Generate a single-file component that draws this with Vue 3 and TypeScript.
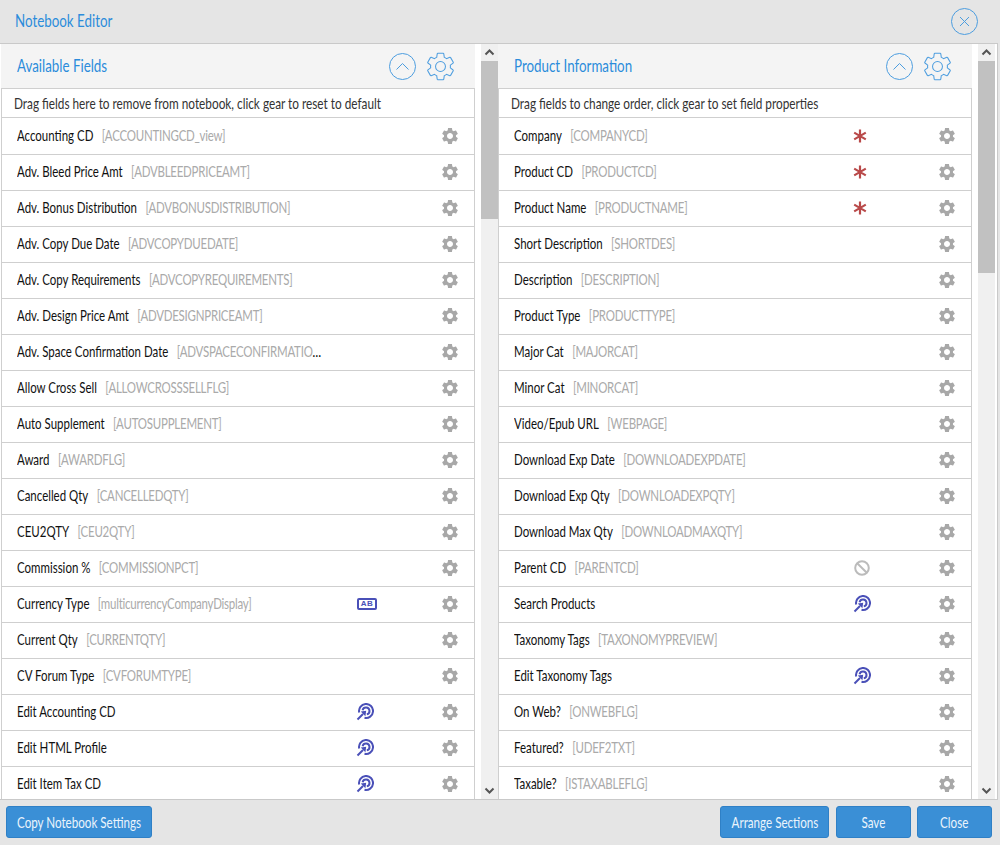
<script setup lang="ts">
type Mark = '' | 'ab' | 'target' | 'star' | 'ban'
interface Row { label: string; code: string; mark?: Mark }

const gear = 'M19.14 12.94c.04-.3.06-.61.06-.94 0-.32-.02-.64-.07-.94l2.03-1.58c.18-.14.23-.41.12-.61l-1.92-3.32c-.12-.22-.37-.29-.59-.22l-2.39.96c-.5-.38-1.03-.7-1.62-.94l-.36-2.54c-.04-.24-.24-.41-.48-.41h-3.84c-.24 0-.43.17-.47.41l-.36 2.54c-.59.24-1.13.57-1.62.94l-2.39-.96c-.22-.08-.47 0-.59.22L2.74 8.87c-.12.21-.08.47.12.61l2.03 1.58c-.05.3-.09.63-.09.94s.02.64.07.94l-2.03 1.58c-.18.14-.23.41-.12.61l1.92 3.32c.12.22.37.29.59.22l2.39-.96c.5.38 1.03.7 1.62.94l.36 2.54c.05.24.24.41.48.41h3.84c.24 0 .44-.17.47-.41l.36-2.54c.59-.24 1.13-.56 1.62-.94l2.39.96c.22.08.47 0 .59-.22l1.92-3.32c.12-.22.07-.47-.12-.61l-2.01-1.58zM12 15.6c-1.98 0-3.6-1.62-3.6-3.6s1.62-3.6 3.6-3.6 3.6 1.62 3.6 3.6-1.62 3.6-3.6 3.6z'

const panels: { title: string; hint: string; thumb: number; rows: Row[] }[] = [
  {
    title: 'Available Fields',
    hint: 'Drag fields here to remove from notebook, click gear to reset to default',
    thumb: 158,
    rows: [
      { label: 'Accounting CD', code: '[ACCOUNTINGCD_view]' },
      { label: 'Adv. Bleed Price Amt', code: '[ADVBLEEDPRICEAMT]' },
      { label: 'Adv. Bonus Distribution', code: '[ADVBONUSDISTRIBUTION]' },
      { label: 'Adv. Copy Due Date', code: '[ADVCOPYDUEDATE]' },
      { label: 'Adv. Copy Requirements', code: '[ADVCOPYREQUIREMENTS]' },
      { label: 'Adv. Design Price Amt', code: '[ADVDESIGNPRICEAMT]' },
      { label: 'Adv. Space Confirmation Date', code: '[ADVSPACECONFIRMATIONDATE]' },
      { label: 'Allow Cross Sell', code: '[ALLOWCROSSSELLFLG]' },
      { label: 'Auto Supplement', code: '[AUTOSUPPLEMENT]' },
      { label: 'Award', code: '[AWARDFLG]' },
      { label: 'Cancelled Qty', code: '[CANCELLEDQTY]' },
      { label: 'CEU2QTY', code: '[CEU2QTY]' },
      { label: 'Commission %', code: '[COMMISSIONPCT]' },
      { label: 'Currency Type', code: '[multicurrencyCompanyDisplay]', mark: 'ab' },
      { label: 'Current Qty', code: '[CURRENTQTY]' },
      { label: 'CV Forum Type', code: '[CVFORUMTYPE]' },
      { label: 'Edit Accounting CD', code: '', mark: 'target' },
      { label: 'Edit HTML Profile', code: '', mark: 'target' },
      { label: 'Edit Item Tax CD', code: '', mark: 'target' },
    ],
  },
  {
    title: 'Product Information',
    hint: 'Drag fields to change order, click gear to set field properties',
    thumb: 212,
    rows: [
      { label: 'Company', code: '[COMPANYCD]', mark: 'star' },
      { label: 'Product CD', code: '[PRODUCTCD]', mark: 'star' },
      { label: 'Product Name', code: '[PRODUCTNAME]', mark: 'star' },
      { label: 'Short Description', code: '[SHORTDES]' },
      { label: 'Description', code: '[DESCRIPTION]' },
      { label: 'Product Type', code: '[PRODUCTTYPE]' },
      { label: 'Major Cat', code: '[MAJORCAT]' },
      { label: 'Minor Cat', code: '[MINORCAT]' },
      { label: 'Video/Epub URL', code: '[WEBPAGE]' },
      { label: 'Download Exp Date', code: '[DOWNLOADEXPDATE]' },
      { label: 'Download Exp Qty', code: '[DOWNLOADEXPQTY]' },
      { label: 'Download Max Qty', code: '[DOWNLOADMAXQTY]' },
      { label: 'Parent CD', code: '[PARENTCD]', mark: 'ban' },
      { label: 'Search Products', code: '', mark: 'target' },
      { label: 'Taxonomy Tags', code: '[TAXONOMYPREVIEW]' },
      { label: 'Edit Taxonomy Tags', code: '', mark: 'target' },
      { label: 'On Web?', code: '[ONWEBFLG]' },
      { label: 'Featured?', code: '[UDEF2TXT]' },
      { label: 'Taxable?', code: '[ISTAXABLEFLG]' },
    ],
  },
]
</script>

<template>
  <div class="editor">
    <header class="top">
      <span class="title">Notebook Editor</span>
      <svg class="round" width="27" height="27" viewBox="0 0 27 27">
        <circle cx="13.5" cy="13.5" r="13" />
        <path d="M9 9l9 9M18 9l-9 9" />
      </svg>
    </header>

    <main class="columns">
      <section v-for="p in panels" :key="p.title" class="column">
        <div class="panel">
          <div class="panel-head">
            <span class="title head-title">{{ p.title }}</span>
            <svg class="round" width="27" height="27" viewBox="0 0 27 27">
              <circle cx="13.5" cy="13.5" r="13" />
              <path d="M7.5 16.5l6-6 6 6" />
            </svg>
            <svg class="cog-line" width="33" height="33" viewBox="0 0 24 24">
              <path :d="gear" />
            </svg>
          </div>
          <div class="list">
            <div class="hint"><span class="hint-text">{{ p.hint }}</span></div>
            <div v-for="r in p.rows" :key="r.label" class="row">
              <div class="row-text">
                <span class="label">{{ r.label }}</span>
                <span v-if="r.code" class="code">{{ r.code }}</span>
              </div>
              <div class="mark">
                <span v-if="r.mark === 'ab'" class="ab">AB</span>
                <svg v-else-if="r.mark === 'target'" width="18" height="18" viewBox="0 0 18 18" class="target">
                  <path d="M3.2 9.5A7 7 0 1 1 8.5 14.8" />
                  <path d="M6.6 7.2A3.5 3.5 0 1 1 10.8 11.4" />
                  <path d="M1.5 16.5L7 11" />
                  <path class="arrow" d="M10.2 7.8L4.8 8.6 9.4 13.2z" />
                </svg>
                <svg v-else-if="r.mark === 'star'" width="14" height="14" viewBox="0 0 14 14" class="star">
                  <path d="M7 .5v13M1.2 3.6l11.6 6.8M12.8 3.6L1.2 10.4" />
                </svg>
                <svg v-else-if="r.mark === 'ban'" width="16" height="16" viewBox="0 0 16 16" class="ban">
                  <circle cx="8" cy="8" r="6.8" />
                  <path d="M3.2 3.2l9.6 9.6" />
                </svg>
              </div>
              <svg class="cog" width="20" height="20" viewBox="0 0 24 24">
                <path :d="gear" />
              </svg>
            </div>
          </div>
        </div>
        <div class="bar">
          <svg class="bar-btn" width="17" height="17" viewBox="0 0 17 17"><path d="M4.5 10.5l4-4 4 4" /></svg>
          <div class="bar-track">
            <div class="bar-thumb" :style="{ height: p.thumb + 'px' }"></div>
          </div>
          <svg class="bar-btn" width="17" height="17" viewBox="0 0 17 17"><path d="M4.5 6.5l4 4 4-4" /></svg>
        </div>
      </section>
    </main>

    <footer class="bottom">
      <button class="btn"><span>Copy Notebook Settings</span></button>
      <span class="spacer"></span>
      <button class="btn wide"><span>Arrange Sections</span></button>
      <button class="btn small"><span>Save</span></button>
      <button class="btn small"><span>Close</span></button>
    </footer>
  </div>
</template>

<style>
html, body { margin: 0; background: #e5e5e5; }
</style>

<style scoped>
.editor {
  --sx: .765;
  width: 1000px;
  height: 845px;
  display: flex;
  flex-direction: column;
  background: #e5e5e5;
  font-family: Lato, "Liberation Sans", sans-serif;
  font-size: 15px;
  overflow: hidden;
}
.top {
  height: 43px;
  flex: none;
  display: flex;
  align-items: center;
  justify-content: space-between;
  padding: 0 22px 0 15px;
  box-sizing: border-box;
}
.title {
  display: inline-block;
  font-size: 17px;
  color: #2b8cdb;
  white-space: nowrap;
  margin-bottom: 2px;
  transform: scaleX(.785);
  transform-origin: left center;
}
.round { flex: none; }
.round circle, .round path { fill: none; stroke: #4c9ddf; stroke-width: 1; }
.columns {
  flex: none;
  width: 998px;
  height: 757px;
  display: flex;
  background: #fff;
  border-top: 1px solid #c9c9c9;
  border-bottom: 1px solid #c9c9c9;
  border-right: 1px solid #c9c9c9;
  box-sizing: border-box;
  overflow: hidden;
}
.column { display: flex; flex: none; width: 497px; }
.column:first-child { width: 498px; }
.panel { width: 474px; flex: none; display: flex; flex-direction: column; }
.column:first-child .panel { width: 475px; padding-left: 1px; box-sizing: border-box; }
.panel-head {
  flex: none;
  height: 44px;
  background: #f4f4f4;
  display: flex;
  align-items: center;
  padding: 1px 18px 0 16px;
  gap: 8px;
  box-sizing: border-box;
}
.head-title { margin-right: auto; }
.cog-line { flex: none; }
.cog-line path { fill: none; stroke: #4c9ddf; stroke-width: .75; }
.list {
  flex: 1;
  min-height: 0;
  overflow: hidden;
  background: #fff;
  border: 1px solid #cfcfcf;
  border-width: 1px 1px 0;
}
.hint {
  height: 29px;
  line-height: 28px;
  padding-left: 12px;
  color: #333;
  box-sizing: border-box;
  border-bottom: 1px solid #cfcfcf;
  white-space: nowrap;
}
.hint-text {
  display: inline-block;
  transform: scaleX(.786);
  transform-origin: left center;
}
.row {
  height: 36px;
  box-sizing: border-box;
  border-bottom: 1px solid #cfcfcf;
  display: flex;
  align-items: center;
  padding: 0 0 1px 15px;
}
.row:nth-child(2) { height: 37px; }
.row-text {
  width: calc(308px / var(--sx));
  margin-right: calc(303px - 308px / var(--sx));
  margin-bottom: 2px;
  flex: none;
  white-space: nowrap;
  overflow: hidden;
  text-overflow: ellipsis;
  transform: scaleX(var(--sx));
  transform-origin: left center;
}
.label { color: #111; margin-right: 11px; }
.code { color: #aaa; letter-spacing: -.3px; }
.mark {
  width: 120px;
  flex: none;
  display: flex;
  align-items: center;
  padding-left: 36px;
  box-sizing: border-box;
}
.ab {
  margin-left: 1px;
  width: 20px;
  height: 12px;
  box-sizing: border-box;
  border: 2px solid #4a50b8;
  border-radius: 2px;
  color: #4a50b8;
  font: bold 8px/8px "Liberation Sans", sans-serif;
  letter-spacing: .4px;
  text-align: center;
}
.target path { fill: none; stroke: #4a50b8; stroke-width: 2; }
.target .arrow { fill: #4a50b8; stroke: none; }
.star path { fill: none; stroke: #b94a4a; stroke-width: 2.2; }
.ban { margin-left: 1px; }
.ban circle, .ban path { fill: none; stroke: #bbb; stroke-width: 2; }
.cog { flex: none; }
.cog path { fill: #a8a8a8; }
.bar {
  margin-left: 6px;
  width: 17px;
  flex: none;
  background: #f0f0f0;
  display: flex;
  flex-direction: column;
}
.bar-btn { flex: none; }
.bar-btn path { fill: none; stroke: #555; stroke-width: 2; }
.bar-track { flex: 1; }
.bar-thumb { background: #c1c1c1; }
.bottom {
  flex: 1;
  display: flex;
  align-items: flex-start;
  padding: 6px 8px 0 6px;
  gap: 6px;
}
.spacer { flex: 1; }
.btn {
  height: 32px;
  padding: 0;
  width: 146px;
  border: 1px solid #2f80c6;
  border-radius: 3px;
  background: #3a8fd6;
  color: #eaf4fc;
  font: inherit;
  display: flex;
  align-items: center;
  justify-content: center;
  white-space: nowrap;
}
.btn span { flex: none; transform: scaleX(.775); }
.wide { width: 109px; margin-right: 1px; }
.small { width: 75px; }
</style>
